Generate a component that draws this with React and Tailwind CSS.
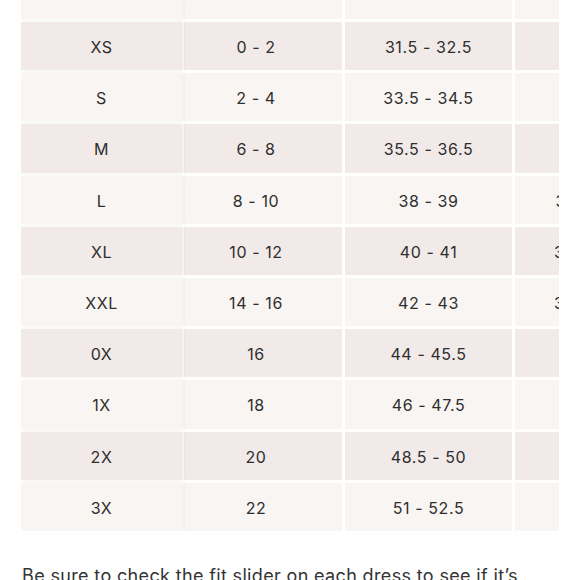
const rows = [
    ["XS", "0 - 2", "31.5 - 32.5", "24 - 25"],
    ["S", "2 - 4", "33.5 - 34.5", "26 - 27"],
    ["M", "6 - 8", "35.5 - 36.5", "28 - 29"],
    ["L", "8 - 10", "38 - 39", "30.5 - 31.5"],
    ["XL", "10 - 12", "40 - 41", "32.5 - 33.5"],
    ["XXL", "14 - 16", "42 - 43", "34.5 - 35.5"],
    ["0X", "16", "44 - 45.5", "37 - 38"],
    ["1X", "18", "46 - 47.5", "39 - 40"],
    ["2X", "20", "48.5 - 50", "41 - 43"],
    ["3X", "22", "51 - 52.5", "44 - 46"],
];

function Row({ cells, dark, header }) {
    const bg = dark ? "bg-[#f1eae8]" : "bg-[#f9f5f2]";
    const h = header ? "h-[19px]" : "h-[48.2px] pt-[2px]";
    return (
        <div className="flex">
            <div className={`${bg} ${h} w-[161px] shrink-0 flex items-center justify-center shadow-[2px_0_3px_rgba(0,0,0,0.07)] relative z-10`}>
                {cells[0]}
            </div>
            <div className={`${bg} ${h} w-[158px] ml-[2px] pr-[14px] shrink-0 flex items-center justify-center`}>
                {cells[1]}
            </div>
            <div className={`${bg} ${h} w-[167px] ml-[3px] shrink-0 flex items-center justify-center`}>
                {cells[2]}
            </div>
            <div className={`${bg} ${h} w-[168px] ml-[3px] shrink-0 flex items-center justify-center`}>
                {cells[3]}
            </div>
        </div>
    );
}

export default function App() {
    return (
        <div className="w-[580px] h-[580px] overflow-hidden bg-white font-['Inter',sans-serif] text-[#2e2e2e]">
            <div className="ml-[21px] w-[538px] overflow-hidden">
                <div className="flex flex-col gap-[3px] text-[16px] tracking-[0.6px]">
                    <Row cells={["", "", "", ""]} header />
                    {rows.map((r, i) => (
                        <Row key={r[0]} cells={r} dark={i % 2 === 0} />
                    ))}
                </div>
            </div>
            <p className="ml-[22px] w-[530px] mt-[31px] text-[18px] leading-[28px] tracking-[0.35px] text-[#333]">
                Be sure to check the fit slider on each dress to see if it’s running true to size.
            </p>
        </div>
    );
}
